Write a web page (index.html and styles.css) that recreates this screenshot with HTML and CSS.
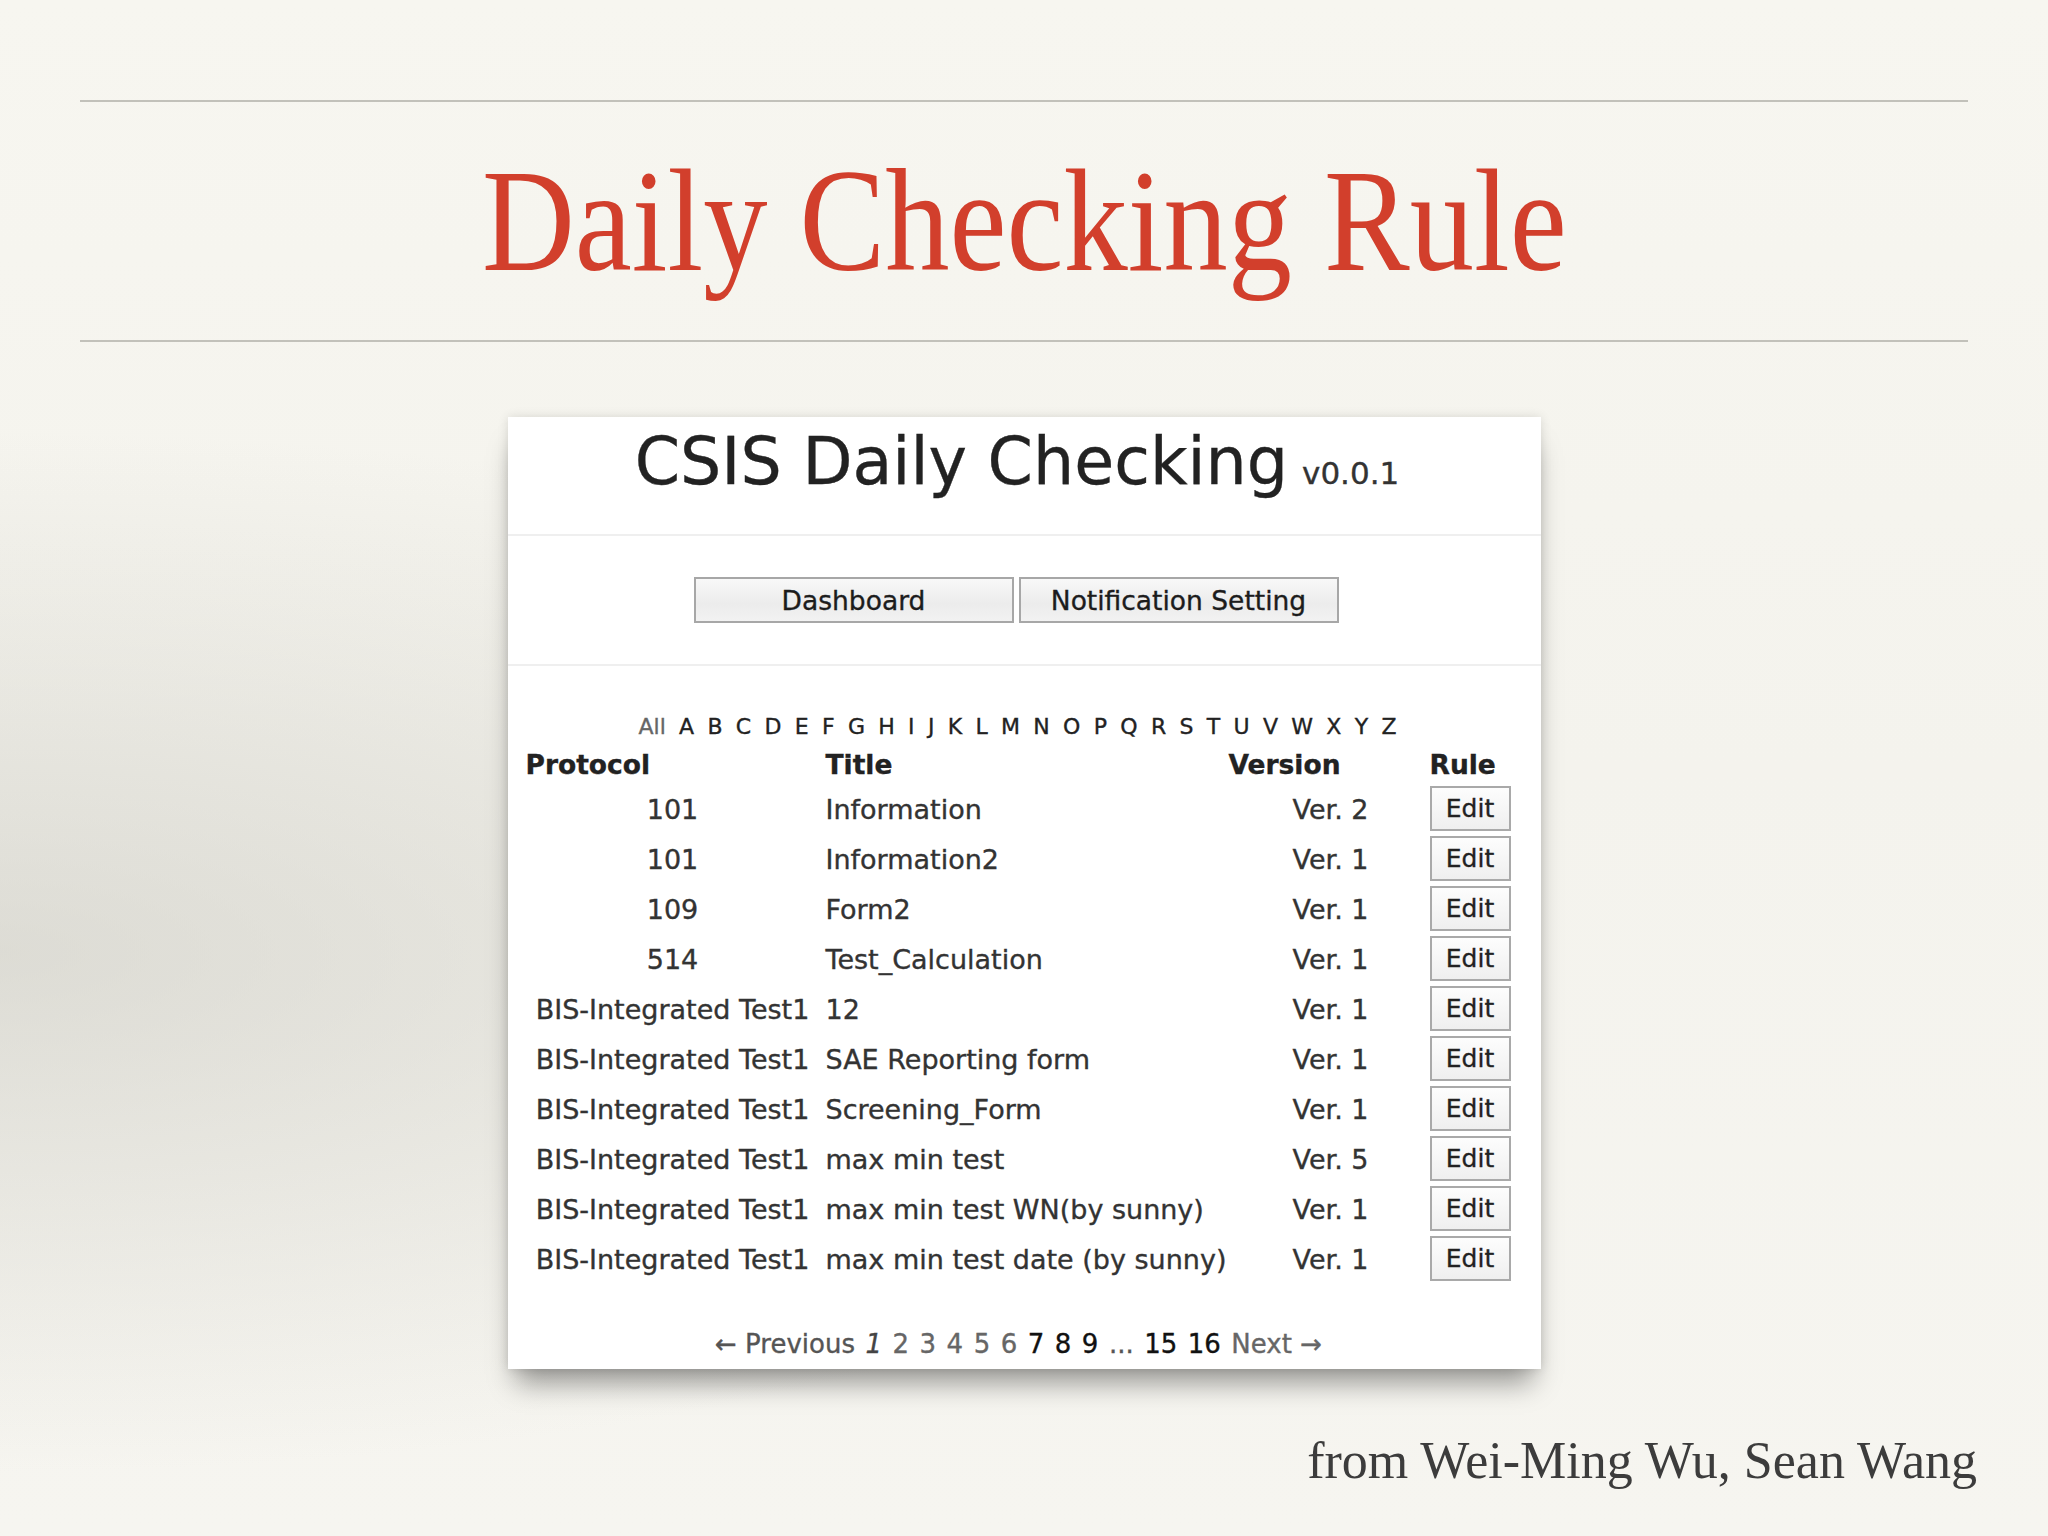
FILE: index.html
```html
<!DOCTYPE html>
<html lang="en">
<head>
<meta charset="utf-8">
<title>Daily Checking Rule</title>
<link rel="stylesheet" href="styles.css">
</head>
<body>
<div class="slide">
  <div class="rule-line rule-top"></div>
  <h1 class="slide-title"><span class="slide-title-text">Daily Checking Rule</span></h1>
  <div class="rule-line rule-bottom"></div>

  <div class="card">
    <div class="app-head">
      <span class="app-name">CSIS Daily Checking</span><span class="app-ver">v0.0.1</span>
    </div>
    <div class="app-nav">
      <button class="nav-btn">Dashboard</button>
      <button class="nav-btn">Notification Setting</button>
    </div>
    <div class="app-body">
      <div class="alpha">
        <span class="alpha-all">All</span><span>A</span><span>B</span><span>C</span><span>D</span><span>E</span><span>F</span><span>G</span><span>H</span><span>I</span><span>J</span><span>K</span><span>L</span><span>M</span><span>N</span><span>O</span><span>P</span><span>Q</span><span>R</span><span>S</span><span>T</span><span>U</span><span>V</span><span>W</span><span>X</span><span>Y</span><span>Z</span>
      </div>
      <div class="grid grid-head">
        <div class="th">Protocol</div>
        <div class="th th-title">Title</div>
        <div class="th">Version</div>
        <div class="th">Rule</div>
      </div>
      <div class="grid row"><div class="c-proto">101</div><div class="c-title">Information</div><div class="c-ver">Ver. 2</div><div class="c-rule"><button class="edit-btn">Edit</button></div></div>
      <div class="grid row"><div class="c-proto">101</div><div class="c-title">Information2</div><div class="c-ver">Ver. 1</div><div class="c-rule"><button class="edit-btn">Edit</button></div></div>
      <div class="grid row"><div class="c-proto">109</div><div class="c-title">Form2</div><div class="c-ver">Ver. 1</div><div class="c-rule"><button class="edit-btn">Edit</button></div></div>
      <div class="grid row"><div class="c-proto">514</div><div class="c-title">Test_Calculation</div><div class="c-ver">Ver. 1</div><div class="c-rule"><button class="edit-btn">Edit</button></div></div>
      <div class="grid row"><div class="c-proto">BIS-Integrated Test1</div><div class="c-title">12</div><div class="c-ver">Ver. 1</div><div class="c-rule"><button class="edit-btn">Edit</button></div></div>
      <div class="grid row"><div class="c-proto">BIS-Integrated Test1</div><div class="c-title">SAE Reporting form</div><div class="c-ver">Ver. 1</div><div class="c-rule"><button class="edit-btn">Edit</button></div></div>
      <div class="grid row"><div class="c-proto">BIS-Integrated Test1</div><div class="c-title">Screening_Form</div><div class="c-ver">Ver. 1</div><div class="c-rule"><button class="edit-btn">Edit</button></div></div>
      <div class="grid row"><div class="c-proto">BIS-Integrated Test1</div><div class="c-title">max min test</div><div class="c-ver">Ver. 5</div><div class="c-rule"><button class="edit-btn">Edit</button></div></div>
      <div class="grid row"><div class="c-proto">BIS-Integrated Test1</div><div class="c-title">max min test WN(by sunny)</div><div class="c-ver">Ver. 1</div><div class="c-rule"><button class="edit-btn">Edit</button></div></div>
      <div class="grid row"><div class="c-proto">BIS-Integrated Test1</div><div class="c-title">max min test date (by sunny)</div><div class="c-ver">Ver. 1</div><div class="c-rule"><button class="edit-btn">Edit</button></div></div>
      <div class="pager">
        <span class="pg-muted">&larr; Previous</span>
        <span class="pg-cur">1</span>
        <span class="pg-light">2</span>
        <span class="pg-light">3</span>
        <span class="pg-light">4</span>
        <span class="pg-light">5</span>
        <span class="pg-light">6</span>
        <span class="pg-dark">7</span>
        <span class="pg-dark">8</span>
        <span class="pg-dark">9</span>
        <span class="pg-muted">...</span>
        <span class="pg-dark">15</span>
        <span class="pg-dark">16</span>
        <span class="pg-light">Next &rarr;</span>
      </div>
    </div>
  </div>

  <div class="credit">from Wei-Ming Wu, Sean Wang</div>
</div>
</body>
</html>
```

FILE: styles.css
```css
html, body {
  margin: 0;
  padding: 0;
}

body {
  width: 2048px;
  height: 1536px;
  overflow: hidden;
  background:
    radial-gradient(ellipse 1500px 520px at 0% 62%, rgba(205, 204, 196, 0.6), rgba(205, 204, 196, 0) 100%),
    linear-gradient(#f7f6f0 0%, #f4f3ed 50%, #f6f5f0 100%);
}

.slide {
  display: flex;
  flex-direction: column;
  width: 2048px;
  height: 1536px;
}

.rule-line {
  height: 2px;
  margin: 0 80px;
  background: #c2c1ba;
}

.rule-top {
  margin-top: 100px;
}

.slide-title {
  margin: 47px 0 0 0;
  height: 145px;
  line-height: 145px;
  font-family: "Liberation Serif", "Times New Roman", serif;
  font-weight: normal;
  font-size: 146px;
  color: #d23f2c;
  text-align: center;
  white-space: nowrap;
}

.slide-title-text {
  display: inline-block;
  transform: scaleX(0.88);
  transform-origin: center;
}

.rule-bottom {
  margin-top: 46px;
}

.card {
  align-self: center;
  width: 1033px;
  margin-top: 75px;
  background: #ffffff;
  box-shadow: 0 22px 26px -8px rgba(0, 0, 0, 0.38), 0 0 10px rgba(0, 0, 0, 0.12);
  font-family: "DejaVu Sans", Verdana, sans-serif;
  color: #222;
  padding-bottom: 12px;
  -webkit-text-stroke: 0.35px currentColor;
}

.app-head {
  padding: 13px 14px 40px 0;
  height: 64px;
  line-height: 64px;
  text-align: center;
  white-space: nowrap;
  border-bottom: 2px solid #efefef;
}

.app-name {
  font-size: 65px;
  color: #222;
}

.app-ver {
  font-size: 31px;
  margin-left: 14px;
  color: #333;
}

.app-nav {
  display: flex;
  justify-content: center;
  gap: 5px;
  padding: 41px 16px 41px 0;
  border-bottom: 2px solid #efefef;
}

.nav-btn {
  width: 320px;
  height: 46px;
  padding: 0;
  border: 2px solid #a7a7a7;
  border-radius: 0;
  background: linear-gradient(#f8f8f8, #ececec 60%, #f2f2f2);
  font-family: "DejaVu Sans", Verdana, sans-serif;
  font-size: 26.5px;
  color: #1c1c1c;
  -webkit-text-stroke: 0.35px currentColor;
}

.app-body {
  padding: 50px 0 0 18px;
}

.alpha {
  display: flex;
  gap: 13.3px;
  padding-left: 113px;
  height: 22px;
  line-height: 22px;
  font-size: 22px;
  color: #222;
}

.alpha-all {
  color: #666;
}

.grid {
  display: grid;
  grid-template-columns: 294px 409px 201px 81px;
}

.grid-head {
  margin-top: 13px;
  margin-bottom: 5px;
  height: 27px;
  line-height: 27px;
  font-size: 26.5px;
  font-weight: bold;
  color: #222;
}

.th-title {
  padding-left: 6px;
}

.row {
  height: 50px;
  align-items: center;
  font-size: 27px;
  color: #333;
}

.c-proto {
  text-align: center;
  white-space: nowrap;
  padding-top: 2px;
}

.c-title {
  padding-left: 6px;
  white-space: nowrap;
  padding-top: 2px;
}

.c-ver {
  text-align: right;
  padding-right: 61px;
  padding-top: 2px;
}

.c-rule {
  display: flex;
}

.edit-btn {
  width: 81px;
  height: 45px;
  padding: 0;
  border: 2px solid #a9a9a9;
  border-radius: 0;
  background: linear-gradient(#fdfdfd, #efefef);
  font-family: "DejaVu Sans", Verdana, sans-serif;
  font-size: 25px;
  color: #222;
  -webkit-text-stroke: 0.35px currentColor;
}

.pager {
  display: flex;
  justify-content: center;
  gap: 10.5px;
  margin-top: 48px;
  padding-right: 29px;
  height: 26px;
  line-height: 26px;
  font-size: 26px;
  white-space: nowrap;
}

.pg-muted {
  color: #555;
}

.pg-cur {
  color: #444;
  font-style: italic;
}

.pg-light {
  color: #666;
}

.pg-dark {
  color: #111;
}

.credit {
  margin-top: 66px;
  padding-right: 71px;
  text-align: right;
  height: 52px;
  line-height: 52px;
  font-family: "Liberation Serif", "Times New Roman", serif;
  font-size: 52px;
  color: #3c3c3c;
}
```
